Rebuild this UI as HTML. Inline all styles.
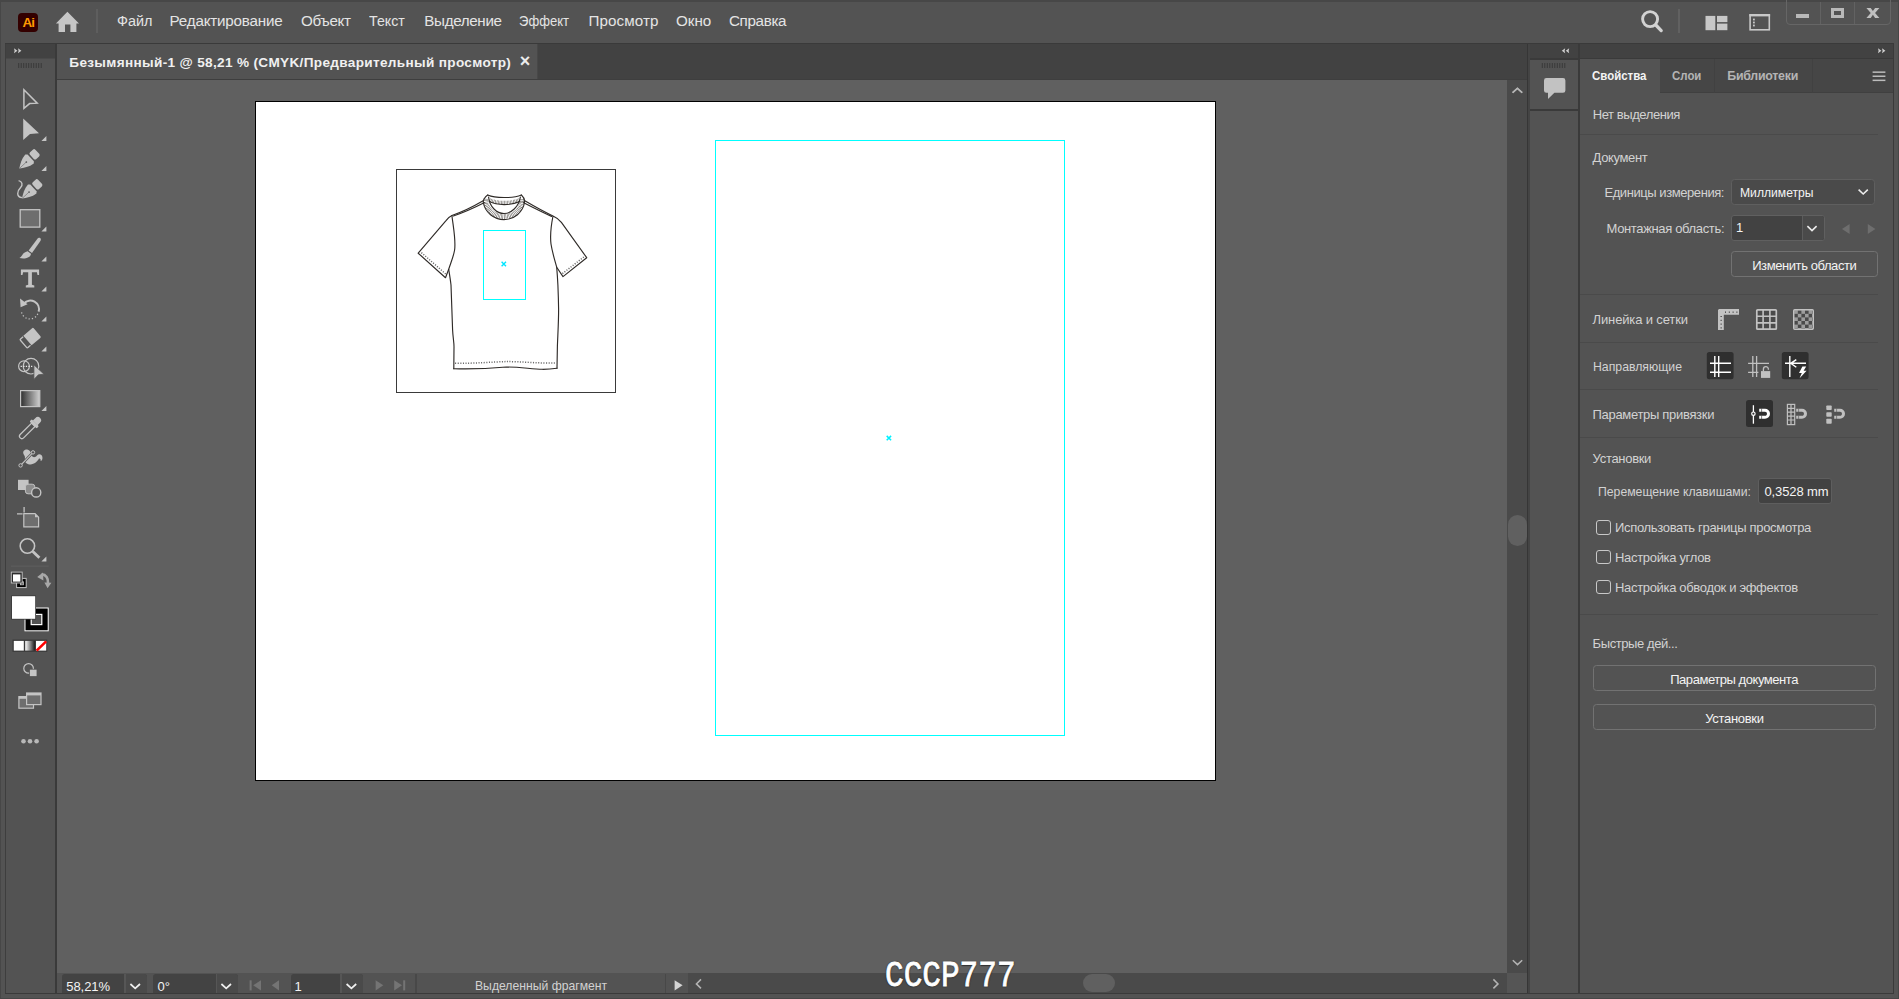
<!DOCTYPE html>
<html lang="ru"><head><meta charset="utf-8"><title>Безымянный-1 @ 58,21 % (CMYK/Предварительный просмотр)</title>
<style>
*{box-sizing:border-box;margin:0;padding:0}
html,body{width:1899px;height:999px;overflow:hidden;background:#535353}
body{position:relative;font-family:"Liberation Sans",sans-serif;color:#dcdcdc;font-size:13px}
.a{position:absolute}
.t{position:absolute;white-space:nowrap;line-height:1}
svg{position:absolute;overflow:visible}
</style></head><body>
<!-- window frame -->
<div class="a" style="left:0;top:0;width:1899px;height:2px;background:#474747"></div>
<div class="a" style="left:0;top:0;width:1px;height:999px;background:#474747"></div>
<div class="a" style="left:1898px;top:0;width:1px;height:999px;background:#474747"></div>
<div class="a" style="left:0;top:998px;width:1899px;height:1px;background:#474747"></div>

<!-- tab bar -->
<div class="a" style="left:5px;top:43px;width:1889px;height:1px;background:#3a3a3a"></div>
<div class="a" style="left:57px;top:44px;width:1470px;height:35px;background:#424242"></div>
<div class="a" style="left:57px;top:44px;width:480px;height:35px;background:#535353"></div>
<div class="a" style="left:537px;top:44px;width:1.4px;height:35px;background:#484848"></div>
<div class="a" style="left:57px;top:79px;width:1470px;height:1px;background:#3e3e3e"></div>

<!-- canvas -->
<div class="a" style="left:57px;top:80px;width:1450px;height:893px;background:#606060"></div>
<!-- artboard -->
<div class="a" style="left:255px;top:101px;width:961px;height:680px;background:#fff;border:1px solid #000"></div>
<div class="a" style="left:396px;top:169px;width:220px;height:224px;border:1.3px solid #3a3a3a"></div>
<div class="a" style="left:715px;top:140px;width:350px;height:596px;border:1px solid #00ffff"></div>
<svg style="left:396px;top:169px" width="220" height="224" viewBox="396 169 220 224">
<g fill="none" stroke="#2f2b28" stroke-width="1.15" stroke-linejoin="round" stroke-linecap="round">
<!-- left shoulder + sleeve -->
<path d="M483.6 200.6 C472 207.4 462 212.2 451.9 215.5 C449.5 216.6 447.6 218.4 446 220.6 L418.2 253.2 L445.5 277.7 L448.7 269.3"/>
<path d="M484.6 202.6 C474 208 464 212.6 453.4 216"/>
<path d="M451.9 215.5 C453.4 228 456 240 454.6 250 C453.2 258 450.2 264 448.7 269.3 C449.8 276 450.6 281 451 285 C451.6 300 452 315 452.6 330 C453 338 454 342 454 346.7 L453.8 368.7"/>
<!-- hem -->
<path d="M453.8 368.7 C470 369.2 490 368.4 506.3 367 C520 367 530 368.8 542.7 369.3 C548 369.3 553 368.8 557 368.2"/>
<path d="M455 363.3 C475 363.5 492 362 506 361.6 C520 361.4 540 363.6 556.2 363" stroke-width="1.5" stroke-dasharray="1.1 1.5" stroke="#6a6a6a" stroke-linecap="butt"/>
<!-- right side -->
<path d="M557 368.2 L557.4 346 C557.8 335 558.7 320 558.6 309 C558.5 300 558.2 292 557.9 285 C557.6 279 557.2 273 556.7 267.2"/>
<path d="M553 216 C551 226 550 236 551 244 C552.4 253 555 261 556.7 267.2 L563 276.6 L586.7 257.7 L561.4 222.4 C559.4 219.6 556.6 217.6 553 216 C545 212.4 536 207.4 524.4 200.6"/>
<path d="M523.4 202.6 C534 208 543 212.6 551.6 216.4"/>
<!-- sleeve hem stitches -->
<path d="M421.4 252.6 L446.4 274.6" stroke-width="1.5" stroke-dasharray="1.1 1.5" stroke="#6a6a6a" stroke-linecap="butt"/>
<path d="M583.8 257 L562.2 273.8" stroke-width="1.5" stroke-dasharray="1.1 1.5" stroke="#6a6a6a" stroke-linecap="butt"/>
<!-- collar ribbing -->
<path d="M485.6 198.8 C485.2 209 494 216.5 504 216.5 C514 216.5 522.6 209 522.4 198.8" stroke="#5a5652" stroke-width="5" stroke-dasharray="0.55 0.95" stroke-linecap="butt"/>
<path d="M489.6 199.8 C497 203.6 511 203.6 519.4 199.8" stroke="#5a5652" stroke-width="3.6" stroke-dasharray="0.55 0.95" stroke-linecap="butt"/>
<!-- collar outlines -->
<path d="M487.7 195 C484.6 197.4 483 200 483.3 202.5 C485 212.4 494 219.6 504 219.6 C514 219.6 523 212.4 524.6 202 C524.8 199.6 523.6 197 521.4 195"/>
<path d="M488.6 197 C489.4 207 497 213.5 504 213.5 C511 213.5 518.8 207 520.4 197"/>
<path d="M487.7 195 C495 198.4 513 198.4 521.4 195"/>
<path d="M489.4 201.6 C497 205.6 511 205.6 519.8 201.6"/>
</g>
<rect x="483.5" y="230.5" width="42" height="69" fill="none" stroke="#00ffff" stroke-width="1"/>
<path d="M501.6 261.8 L506 266.2 M506 261.8 L501.6 266.2" stroke="#00e5ff" stroke-width="1.4"/>
<path d="M886.7 435.9 L891.1 440.3 M891.1 435.9 L886.7 440.3" stroke="#00f0ff" stroke-width="1.5"/>
</svg>


<!-- v scrollbar -->
<div class="a" style="left:1507px;top:80px;width:20px;height:893px;background:#4a4a4a"></div>
<div class="a" style="left:1508px;top:515px;width:19px;height:31.4px;border-radius:9.5px;background:#606060"></div>
<!-- status bar -->
<div class="a" style="left:57px;top:973px;width:1470px;height:20px;background:#535353"></div>
<div class="a" style="left:688px;top:973px;width:819px;height:20px;background:#4a4a4a"></div>
<div class="a" style="left:1083px;top:974px;width:32px;height:18px;border-radius:9px;background:#606060"></div>
<!-- status bar fields -->
<div class="a" style="left:62px;top:974.3px;width:85px;height:19px;background:#434343;border-radius:3px 3px 0 0"></div>
<div class="a" style="left:125.6px;top:974.3px;width:21.4px;height:19px;background:#4a4a4a;border-radius:0 3px 0 0"></div>
<div class="a" style="left:124.2px;top:974.3px;width:1.4px;height:19px;background:#565656"></div>
<div class="a" style="left:153.3px;top:974.3px;width:85px;height:19px;background:#434343;border-radius:3px 3px 0 0"></div>
<div class="a" style="left:216.9px;top:974.3px;width:21.4px;height:19px;background:#4a4a4a;border-radius:0 3px 0 0"></div>
<div class="a" style="left:215.5px;top:974.3px;width:1.4px;height:19px;background:#565656"></div>
<div class="a" style="left:291px;top:974.3px;width:72.4px;height:19px;background:#434343;border-radius:3px 3px 0 0"></div>
<div class="a" style="left:341.6px;top:974.3px;width:21.8px;height:19px;background:#4a4a4a;border-radius:0 3px 0 0"></div>
<div class="a" style="left:340.2px;top:974.3px;width:1.4px;height:19px;background:#565656"></div>
<div class="a" style="left:415.4px;top:974px;width:1.2px;height:19px;background:#484848"></div>
<div class="a" style="left:665px;top:974px;width:1.2px;height:19px;background:#484848"></div>
<svg style="left:57px;top:973px" width="1471" height="20" viewBox="57 973 1471 20">
<g fill="none" stroke="#f0f0f0" stroke-width="1.7"><path d="M130.4 984 L135.2 988.4 L140 984"/><path d="M221.4 984 L226.2 988.4 L231 984"/><path d="M346.6 984 L351.4 988.4 L356.2 984"/></g>
<g fill="#747474"><rect x="249.6" y="980.3" width="2" height="10.1"/><path d="M261 980.3 V990.4 L253.2 985.35 Z"/><path d="M279 980.3 V990.4 L271.7 985.35 Z"/><path d="M375.6 980.3 V990.4 L383.3 985.35 Z"/><path d="M394.2 980.3 V990.4 L402 985.35 Z"/><rect x="403.2" y="980.3" width="2" height="10.1"/></g>
<path d="M674.6 980.3 V990.4 L682.6 985.35 Z" fill="#d4d4d4"/>
<path d="M701 979.4 L696.4 983.9 L701 988.4" fill="none" stroke="#b4b4b4" stroke-width="1.5"/>
<path d="M1493.4 979.4 L1498 983.9 L1493.4 988.4" fill="none" stroke="#b4b4b4" stroke-width="1.5"/>
<path d="M1512.6 92.6 L1517.4 88.2 L1522.2 92.6" fill="none" stroke="#b4b4b4" stroke-width="1.5" transform="translate(0 0)"/>
</svg>
<svg style="left:1507px;top:80px" width="21" height="893" viewBox="1507 80 21 893">
<path d="M1512.6 92.8 L1517.4 88.4 L1522.2 92.8" fill="none" stroke="#b4b4b4" stroke-width="1.5"/>
<path d="M1512.8 960.2 L1517.5 964.6 L1522.2 960.2" fill="none" stroke="#b4b4b4" stroke-width="1.5"/>
</svg>
<div class="a" style="left:1507px;top:973px;width:20px;height:20px;background:#555"></div>

<div class="a" style="left:5px;top:993px;width:1889px;height:1px;background:#3a3a3a"></div>

<!-- left toolbar -->
<div class="a" style="left:5px;top:44px;width:52px;height:949px;background:#535353;border-left:1px solid #3e3e3e;border-right:2px solid #3a3a3a"></div>
<div class="a" style="left:6px;top:44px;width:49px;height:14px;background:#424242"></div>
<div class="a" style="left:6px;top:58px;width:49px;height:1px;background:#4a4a4a"></div>
<!-- toolbar header chevrons and grip -->
<svg style="left:0;top:0" width="57" height="800" viewBox="0 0 57 800">
<g fill="#d0d0d0"><path d="M14 48.2 l3.4 2.5 l-3.4 2.5 l0.6 -2.5 z M18 48.2 l3.4 2.5 l-3.4 2.5 l0.6 -2.5 z"/></g>
<g fill="#3a3a3a"><rect x="18.2" y="63" width="1" height="5"/><rect x="20.7" y="63" width="1" height="5"/><rect x="23.2" y="63" width="1" height="5"/><rect x="25.7" y="63" width="1" height="5"/><rect x="28.2" y="63" width="1" height="5"/><rect x="30.7" y="63" width="1" height="5"/><rect x="33.2" y="63" width="1" height="5"/><rect x="35.7" y="63" width="1" height="5"/><rect x="38.2" y="63" width="1" height="5"/><rect x="40.7" y="63" width="1" height="5"/></g>
<g fill="#c4c4c4" stroke="none">
<!-- selection (outline) -->
<path d="M23.9 89.8 L37.2 103.2 L29.6 103.6 L23.9 108.4 Z" fill="none" stroke="#c4c4c4" stroke-width="1.5" stroke-linejoin="miter"/>
<!-- direct selection -->
<path d="M23.2 118.4 L39 133.3 L30 134 L23.2 140 Z"/>
<!-- flyout triangles -->
<path d="M46.4 136 V141 H41.4 Z M46.4 166 V171 H41.4 Z M46.4 226.4 V231.4 H41.4 Z M46.4 256.4 V261.4 H41.4 Z M46.4 286.4 V291.4 H41.4 Z M46.4 316.4 V321.4 H41.4 Z M46.4 346.4 V351.4 H41.4 Z M46.4 406 V411 H41.4 Z M46.4 556.4 V561.4 H41.4 Z"/>
<!-- pen -->
<g transform="translate(19.3 168.6) rotate(-43)"><path d="M0 0 C3.4 -2.6 8.6 -5.8 14 -6.2 L15.6 -4.6 V4.6 L14 6.2 C8.6 5.8 3.4 2.6 0 0 Z"/><rect x="17.2" y="-4.6" width="7.4" height="9.2" rx="1.8"/><path d="M1 0 H9" stroke="#777" stroke-width="0.7"/><circle cx="9.6" cy="0" r="0.9" fill="#666"/></g>
<!-- curvature pen -->
<g transform="translate(22 198.6) rotate(-43)"><path d="M0 0 C3.4 -2.6 8.6 -5.8 14 -6.2 L15.6 -4.6 V4.6 L14 6.2 C8.6 5.8 3.4 2.6 0 0 Z"/><rect x="17.2" y="-4.6" width="7.4" height="9.2" rx="1.8"/><path d="M1 0 H9" stroke="#777" stroke-width="0.7"/><circle cx="9.6" cy="0" r="0.9" fill="#666"/></g>
<path d="M22 197.6 C16 197 17 191 20.6 187.4 C23 185 22.4 181.4 18.6 180.6" fill="none" stroke="#c4c4c4" stroke-width="1.4"/>
<!-- rectangle -->
<rect x="20.2" y="209.7" width="19.6" height="17.4" fill="#6e6e6e" stroke="#c4c4c4" stroke-width="1.3"/>
<!-- brush -->
<path d="M39.6 237.8 C41 238.4 41.2 239.6 40.4 241 L32 253 L28.6 250.6 L37.6 238.6 C38.2 237.8 38.8 237.5 39.6 237.8 Z"/>
<path d="M27.6 251.2 L31 253.8 C30.6 257.6 25 259.4 19.4 258 C22.4 256.6 22 252.6 27.6 251.2 Z"/>
<!-- type T -->
<path d="M20.9 269.6 H39.1 V275 H37.5 L36.9 272.3 H31.9 V284.8 L34.3 285.4 V287.4 H25.8 V285.4 L28.2 284.8 V272.3 H23.1 L22.5 275 H20.9 Z"/>
<!-- rotate -->
<path d="M24 303.4 A8.6 8.6 0 0 1 38.6 311.6" fill="none" stroke="#c4c4c4" stroke-width="2"/>
<path d="M20 298.6 L27.6 304.2 L20.6 307.2 Z"/>
<path d="M37.8 313.8 A8.6 8.6 0 0 1 21.4 311.4" fill="none" stroke="#c4c4c4" stroke-width="1.3" stroke-dasharray="1.2 2.1"/>
<!-- eraser -->
<g transform="translate(30.05 338.3) rotate(49.6)"><path d="M-5.2 -9.25 H5.2 Q6.35 -9.25 6.35 -8.1 V3.4 H-6.35 V-8.1 Q-6.35 -9.25 -5.2 -9.25 Z"/><path d="M-5.7 4.2 V7.6 Q-5.7 8.6 -4.7 8.6 H4.7 Q5.7 8.6 5.7 7.6 V4.2" fill="none" stroke="#c4c4c4" stroke-width="1.3"/></g>
<!-- shape builder -->
<circle cx="24" cy="366.2" r="5.4" fill="none" stroke="#c4c4c4" stroke-width="1.2"/>
<circle cx="31" cy="366.2" r="7.8" fill="none" stroke="#c4c4c4" stroke-width="1.2"/>
<path d="M20.6 366.4 H33.4" stroke="#e6e6e6" stroke-width="1.1" stroke-dasharray="1.3 1.3" fill="none"/>
<path d="M33.9 364.8 L44 374.2 L38.4 374.8 L33.9 379.4 Z" stroke="#535353" stroke-width="0.8"/>
<!-- eyedropper -->
<g transform="translate(20.2 437.9) rotate(-45)"><path d="M2.4 -2.4 H18.6 V2.4 H2.4 Q0 2.4 0 0 Q0 -2.4 2.4 -2.4 Z" fill="none" stroke="#c4c4c4" stroke-width="1.3"/><rect x="18.2" y="-5" width="3.2" height="10" rx="1"/><path d="M21.2 -3.3 H24.6 Q28.2 -3.3 28.2 0 Q28.2 3.3 24.6 3.3 H21.2 Z"/></g>
<!-- puppet / symbol -->
<path d="M24 455 C22 452 24 449.4 27.2 449.6 C30 450 31 452.6 31.6 455 C32.6 458 35.4 457.6 37 455.6 C38.6 453.6 41.8 454 42.4 457 C42.8 459.4 41.6 461 40.6 461 C41 459.4 40.2 458.2 39 458.6 C37.6 461.6 34 464.8 29.6 464.4 C26 464 24.6 461.6 24.8 459.4 C25 457.6 25.2 456.6 24 455 Z"/>
<path d="M20.8 465.2 L32.8 452.6" stroke="#535353" stroke-width="2.6" fill="none"/>
<path d="M20.8 465.2 L32.8 452.6" stroke="#c4c4c4" stroke-width="1.1" fill="none"/>
<circle cx="20.6" cy="465.4" r="1.7" fill="#535353" stroke="#c4c4c4" stroke-width="1"/>
<circle cx="33" cy="452.4" r="1.7" fill="#535353" stroke="#c4c4c4" stroke-width="1"/>
<!-- blend -->
<rect x="18" y="479.8" width="10.6" height="10.2"/>
<rect x="25.4" y="484.2" width="9.4" height="9.6" rx="2.6" fill="#8c8c8c" stroke="#c4c4c4" stroke-width="1"/>
<circle cx="36.2" cy="492.4" r="4.6" fill="#535353" stroke="#c4c4c4" stroke-width="1.4"/>
<!-- artboard tool -->
<path d="M23.8 513.6 H35 L38.6 517.2 V526.8 H23.8 Z" fill="#6e6e6e" stroke="#c4c4c4" stroke-width="1.2"/>
<path d="M35 513.6 V517.2 H38.6 Z"/>
<path d="M17 513.9 H22.6 M24.1 507 V512.6" stroke="#c4c4c4" stroke-width="1.3" fill="none"/>
<!-- zoom -->
<circle cx="27.4" cy="546" r="7.2" fill="none" stroke="#c4c4c4" stroke-width="1.6"/>
<path d="M32.8 551.4 L39.4 557.8" stroke="#c4c4c4" stroke-width="2.8" fill="none"/>
<!-- separator -->
<rect x="11" y="565.6" width="37.6" height="1" fill="#5f5f5f"/>
<!-- default fill/stroke -->
<rect x="16.6" y="578.4" width="9.6" height="9.2" fill="#000" stroke="#c4c4c4" stroke-width="1"/>
<rect x="20.4" y="581.8" width="3" height="3" fill="#535353" stroke="#c4c4c4" stroke-width="0.8"/>
<rect x="11.3" y="572.1" width="10.9" height="10.9" fill="#2c2c2c" stroke="#c4c4c4" stroke-width="0.9"/>
<rect x="13" y="574.4" width="7.4" height="7.2" fill="#fff"/>
<!-- swap arrow -->
<path d="M41.6 574.4 C46 574.6 48.4 578 48 583.2" fill="none" stroke="#a8a8a8" stroke-width="2.6"/>
<path d="M37.2 577 L43 572.6 L43.4 580.6 Z M44.4 582.4 L51.4 582.8 L47.6 588.2 Z" fill="#a8a8a8"/>
<!-- fill / stroke -->
<rect x="24.5" y="607.5" width="24.2" height="23.8" fill="#fff"/>
<rect x="25.5" y="608.5" width="22.2" height="21.8" fill="#000"/>
<rect x="30.6" y="613.8" width="11.8" height="11.4" fill="#fff"/>
<rect x="31.8" y="615" width="9.4" height="9" fill="#535353"/>
<rect x="11.2" y="595.4" width="24.8" height="24.2" fill="#3a3a3a"/>
<rect x="12" y="596.2" width="23.2" height="22.6" fill="#fff"/>
<!-- color / gradient / none -->
<rect x="12.5" y="639.6" width="34.8" height="12.2" fill="#3a3a3a"/>
<rect x="13.8" y="640.9" width="10" height="9.7" fill="#fff"/>
<rect x="25.2" y="640.9" width="9.6" height="9.7" fill="url(#gr1)"/>
<rect x="36" y="640.9" width="10.2" height="9.7" fill="#fff"/>
<path d="M36.6 650.6 L46.2 641.4" stroke="#f00" stroke-width="2.6" fill="none"/>
<!-- draw mode -->
<circle cx="28.6" cy="668.4" r="4.8" fill="none" stroke="#c4c4c4" stroke-width="1.2"/>
<rect x="29.4" y="669.2" width="7.6" height="7.4" stroke="#535353" stroke-width="0.8"/>
<!-- screen mode -->
<rect x="18.9" y="696.6" width="14.6" height="11.6" fill="#6e6e6e" stroke="#c4c4c4" stroke-width="1.2"/>
<rect x="18.9" y="696.6" width="14.6" height="2.2"/>
<rect x="26.6" y="693" width="14.4" height="11.6" fill="#6e6e6e" stroke="#c4c4c4" stroke-width="1.2"/>
<rect x="26.6" y="693" width="14.4" height="2.4"/>
<!-- dots -->
<circle cx="23.5" cy="741.3" r="2.3" fill="#b8b8b8"/><circle cx="30" cy="741.3" r="2.3" fill="#b8b8b8"/><circle cx="36.6" cy="741.3" r="2.3" fill="#b8b8b8"/>
</g>
<defs><linearGradient id="gr1" x1="0" x2="1" y1="0" y2="0"><stop offset="0" stop-color="#fff"/><stop offset="1" stop-color="#1e1e1e"/></linearGradient>
<linearGradient id="gr2" x1="0" x2="1" y1="0" y2="0"><stop offset="0" stop-color="#2e2e2e"/><stop offset="1" stop-color="#d0d0d0"/></linearGradient></defs>
<!-- gradient tool -->
<rect x="20.6" y="390.6" width="19.2" height="16" fill="url(#gr2)" stroke="#c4c4c4" stroke-width="1.2"/>
</svg>


<!-- right dock -->
<div class="a" style="left:1527px;top:44px;width:1px;height:949px;background:#363636"></div>
<div class="a" style="left:1528px;top:44px;width:2px;height:949px;background:#444"></div>
<div class="a" style="left:1530px;top:44px;width:48px;height:949px;background:#535353"></div>
<div class="a" style="left:1530px;top:44px;width:48px;height:14px;background:#424242"></div>
<div class="a" style="left:1530px;top:58px;width:48px;height:2px;background:#3a3a3a"></div>
<div class="a" style="left:1530px;top:109px;width:48px;height:2px;background:#3a3a3a"></div>
<div class="a" style="left:1578px;top:44px;width:2px;height:949px;background:#3a3a3a"></div>
<!-- properties panel -->
<div class="a" style="left:1580px;top:44px;width:314px;height:949px;background:#535353"></div>
<div class="a" style="left:1580px;top:44px;width:314px;height:14px;background:#424242"></div>
<div class="a" style="left:1580px;top:58px;width:314px;height:1px;background:#3a3a3a"></div>
<div class="a" style="left:1580px;top:59px;width:314px;height:34px;background:#464646;border-bottom:1px solid #404040"></div>
<div class="a" style="left:1580px;top:59px;width:80px;height:34px;background:#535353"></div>
<div class="a" style="left:1714px;top:59px;width:1px;height:34px;background:#414141"></div>
<div class="a" style="left:1812px;top:59px;width:1px;height:34px;background:#414141"></div>
<div class="a" style="left:1893px;top:44px;width:1px;height:949px;background:#3a3a3a"></div>
<!-- dock header icons -->
<svg style="left:1528px;top:44px" width="371" height="70" viewBox="1528 44 371 70">
<g fill="#d0d0d0"><path d="M1565.2 48.2 l-0.6 2.5 l0.6 2.5 l-3.4 -2.5 z M1569.2 48.2 l-0.6 2.5 l0.6 2.5 l-3.4 -2.5 z"/><path d="M1878 48.2 l3.4 2.5 l-3.4 2.5 l0.6 -2.5 z M1882 48.2 l3.4 2.5 l-3.4 2.5 l0.6 -2.5 z"/></g>
<g fill="#3a3a3a"><rect x="1541.8" y="63" width="1" height="5"/><rect x="1544.3" y="63" width="1" height="5"/><rect x="1546.8" y="63" width="1" height="5"/><rect x="1549.3" y="63" width="1" height="5"/><rect x="1551.8" y="63" width="1" height="5"/><rect x="1554.3" y="63" width="1" height="5"/><rect x="1556.8" y="63" width="1" height="5"/><rect x="1559.3" y="63" width="1" height="5"/><rect x="1561.8" y="63" width="1" height="5"/><rect x="1564.3" y="63" width="1" height="5"/></g>
<path d="M1546.4 78 H1563 Q1565.4 78 1565.4 80.4 V90.4 Q1565.4 92.8 1563 92.8 H1554.4 L1548 99 V92.8 H1546.4 Q1544 92.8 1544 90.4 V80.4 Q1544 78 1546.4 78 Z" fill="#c2c2c2"/>
<g fill="#bcbcbc"><rect x="1872.6" y="71.4" width="12.8" height="1.5"/><rect x="1872.6" y="75.5" width="12.8" height="1.5"/><rect x="1872.6" y="79.6" width="12.8" height="1.5"/></g>
</svg>
<!-- separators -->
<div class="a" style="left:1580px;top:134px;width:298px;height:1px;background:#4a4a4a"></div>
<div class="a" style="left:1580px;top:294px;width:298px;height:1px;background:#4a4a4a"></div>
<div class="a" style="left:1580px;top:342px;width:298px;height:1px;background:#4a4a4a"></div>
<div class="a" style="left:1580px;top:389px;width:298px;height:1px;background:#4a4a4a"></div>
<div class="a" style="left:1580px;top:437px;width:298px;height:1px;background:#4a4a4a"></div>
<div class="a" style="left:1580px;top:614px;width:298px;height:1px;background:#4a4a4a"></div>
<!-- units dropdown -->
<div class="a" style="left:1731px;top:178.5px;width:144px;height:26px;background:#4a4a4a;border:1.2px solid #5f5f5f;border-radius:3.5px"></div>
<svg style="left:1856px;top:187px" width="14" height="10" viewBox="1856 187 14 10"><path d="M1858.6 189.6 L1863.2 194 L1867.8 189.6" fill="none" stroke="#ececec" stroke-width="1.6"/></svg>
<!-- artboard combo -->
<div class="a" style="left:1731px;top:215px;width:93.5px;height:26px;background:#424242;border:1px solid #606060;border-radius:3px"></div>
<div class="a" style="left:1801.6px;top:216px;width:22px;height:24px;background:#4a4a4a;border-left:1px solid #5c5c5c;border-radius:0 2px 2px 0"></div>
<svg style="left:1804px;top:223px" width="16" height="10" viewBox="1804 223 16 10"><path d="M1807.4 226.2 L1812 230.6 L1816.6 226.2" fill="none" stroke="#ececec" stroke-width="1.6"/></svg>
<svg style="left:1840px;top:222px" width="38" height="14" viewBox="1840 222 38 14"><path d="M1849.6 224 V234 L1842 229 Z M1867.8 224 V234 L1875.4 229 Z" fill="#6e6e6e"/></svg>
<!-- buttons -->
<div class="a" style="left:1731px;top:251px;width:146.5px;height:26px;border:1.2px solid #727272;border-radius:3.5px"></div>
<div class="a" style="left:1592.5px;top:665.3px;width:283.7px;height:26px;border:1.2px solid #727272;border-radius:3.5px"></div>
<div class="a" style="left:1592.5px;top:704px;width:283.7px;height:26px;border:1.2px solid #727272;border-radius:3.5px"></div>
<!-- key increment input -->
<div class="a" style="left:1758px;top:478.2px;width:74.2px;height:25.4px;background:#424242;border:1px solid #5e5e5e;border-radius:3px"></div>
<!-- checkboxes -->
<div class="a" style="left:1596px;top:520px;width:15px;height:14.6px;border:1.3px solid #c8c8c8;border-radius:3px"></div>
<div class="a" style="left:1596px;top:549.9px;width:15px;height:14.6px;border:1.3px solid #c8c8c8;border-radius:3px"></div>
<div class="a" style="left:1596px;top:579.5px;width:15px;height:14.6px;border:1.3px solid #c8c8c8;border-radius:3px"></div>
<svg style="left:1700px;top:300px" width="160" height="135" viewBox="1700 300 160 135">
<defs>
<pattern id="chk" x="1794.2" y="310.2" width="7.2" height="7.2" patternUnits="userSpaceOnUse"><rect width="7.2" height="7.2" fill="#9c9c9c"/><rect x="3.6" width="3.6" height="3.6" fill="#4a4a4a"/><rect y="3.6" width="3.6" height="3.6" fill="#4a4a4a"/></pattern>
</defs>
<!-- ruler -->
<path d="M1719 309 H1739 V314.8 H1723.8 V330 H1718 V310 Z" fill="#c2c2c2"/>
<g fill="#555"><rect x="1725" y="311.4" width="1" height="1.6"/><rect x="1728.8" y="311.4" width="1" height="1.6"/><rect x="1732.6" y="311.4" width="1" height="1.6"/><rect x="1736.4" y="311.4" width="1" height="1.6"/><rect x="1720.4" y="316" width="1.6" height="1"/><rect x="1720.4" y="319.8" width="1.6" height="1"/><rect x="1720.4" y="323.6" width="1.6" height="1"/><rect x="1720.4" y="327.4" width="1.6" height="1"/></g>
<!-- grid -->
<rect x="1756.8" y="309.8" width="19.5" height="19.4" fill="#4a4a4a" stroke="#c2c2c2" stroke-width="1.7" rx="0.8"/>
<path d="M1763.1 309 V330 M1769.9 309 V330 M1756 316.2 H1777 M1756 322.9 H1777" stroke="#c2c2c2" stroke-width="1.6" fill="none"/>
<!-- transparency grid -->
<rect x="1793.7" y="309.7" width="19.6" height="19.6" fill="url(#chk)" stroke="#c2c2c2" stroke-width="1.4" rx="1"/>
<!-- guides show -->
<rect x="1706.8" y="352" width="26.8" height="27.2" rx="2.5" fill="#2f2f2f"/>
<path d="M1714.8 356 V377 M1718.7 356 V377 M1710 363.3 H1731 M1710 372.3 H1731" stroke="#fff" stroke-width="1.4" fill="none"/>
<!-- guides lock -->
<path d="M1752.8 356 V377 M1756.6 356 V377 M1748.1 363.3 H1769 M1748.1 372.3 H1758.4" stroke="#c0c0c0" stroke-width="1.3" fill="none"/>
<rect x="1761" y="371.1" width="9.2" height="6.8" fill="#c0c0c0"/>
<path d="M1763.4 371.4 V369.2 A2.5 2.6 0 0 1 1768.4 369.2 V369.8" stroke="#c0c0c0" stroke-width="1.3" fill="none"/>
<!-- smart guides -->
<rect x="1781.8" y="352" width="26.8" height="27.2" rx="2.5" fill="#2f2f2f"/>
<path d="M1789.8 356 V377 M1785 363.3 H1806 M1796.3 359.6 L1790.8 363.3 L1796.3 367.2" stroke="#fff" stroke-width="1.4" fill="none"/>
<path d="M1802.4 366.4 H1806.2 L1803.6 370.8 H1806.6 L1799.6 378.2 L1801.8 372.9 H1799 Z" fill="#fff"/>
<!-- snap 1 -->
<rect x="1746" y="400" width="27" height="27" rx="2.5" fill="#2f2f2f"/>
<path d="M1753.4 405.2 V423.7" stroke="#fff" stroke-width="1.3"/>
<circle cx="1753.4" cy="413.7" r="1.7" fill="#2f2f2f" stroke="#fff" stroke-width="1.2"/>
<path d="M1759.2 410.3 H1765 A3.5 3.5 0 0 1 1765 417.3 H1759.2" stroke="#fff" stroke-width="3" fill="none"/>
<path d="M1761.6 408.6 V412 M1761.6 415.6 V419" stroke="#2f2f2f" stroke-width="0.6"/>
<!-- snap 2 -->
<rect x="1787.4" y="404.4" width="7.3" height="20.2" fill="none" stroke="#c0c0c0" stroke-width="1.2"/>
<path d="M1791 404 V425 M1787 408.3 H1795 M1787 412.2 H1795 M1787 416.1 H1795 M1787 420 H1795" stroke="#c0c0c0" stroke-width="1.2" fill="none"/>
<path d="M1796.2 410.3 H1802 A3.5 3.5 0 0 1 1802 417.3 H1796.2" stroke="#c0c0c0" stroke-width="3" fill="none"/>
<path d="M1798.6 408.6 V412 M1798.6 415.6 V419" stroke="#535353" stroke-width="0.6"/>
<!-- snap 3 -->
<g fill="#c0c0c0"><rect x="1826.3" y="405.5" width="5.4" height="4.6" rx="0.8"/><rect x="1826.3" y="412.2" width="5.4" height="4.6" rx="0.8"/><rect x="1826.3" y="418.8" width="5.4" height="4.9" rx="0.8"/></g>
<path d="M1834.2 410.3 H1840 A3.5 3.5 0 0 1 1840 417.3 H1834.2" stroke="#c0c0c0" stroke-width="3" fill="none"/>
<path d="M1836.6 408.6 V412 M1836.6 415.6 V419" stroke="#535353" stroke-width="0.6"/>
</svg>



<!-- top bar -->
<div class="a" style="left:18px;top:13px;width:20px;height:19px;border-radius:4px;background:#300"></div>
<span class="t" style="left:22.4px;top:16.3px;font-size:13.4px;font-weight:700;color:#ff9a00;letter-spacing:-0.9px">Ai</span>
<svg style="left:55px;top:11px" width="26" height="22" viewBox="55 11 26 22"><path d="M67.4 11.8 L79 23.6 H76.4 V32 H70.4 V24.6 H65 V32 H58.6 V23.6 H55.9 Z" fill="#c6c6c6"/></svg>
<div class="a" style="left:95.5px;top:9px;width:2px;height:24px;background:#5e5e5e"></div>
<svg style="left:1638px;top:6px" width="30" height="30" viewBox="1638 6 30 30"><circle cx="1650.1" cy="19.1" r="7.5" fill="none" stroke="#d2d2d2" stroke-width="2.9"/><path d="M1655.8 25 L1661.2 30.6" stroke="#d2d2d2" stroke-width="3.3" stroke-linecap="round"/></svg>
<div class="a" style="left:1678.3px;top:9px;width:1.5px;height:24px;background:#616161"></div>
<svg style="left:1704px;top:14px" width="26" height="18" viewBox="1704 14 26 18"><g fill="#c8c8c8"><rect x="1705.5" y="15.9" width="9.8" height="14.3"/><rect x="1717" y="15.9" width="10.4" height="6.2"/><rect x="1717" y="23.6" width="10.4" height="6.6"/></g></svg>
<svg style="left:1748px;top:12px" width="24" height="20" viewBox="1748 12 24 20"><rect x="1750.1" y="15" width="19.2" height="14.8" fill="none" stroke="#c8c8c8" stroke-width="1.6"/><rect x="1749.3" y="14" width="20.8" height="2.4" fill="#c8c8c8"/><g fill="#c8c8c8"><rect x="1753" y="18.6" width="1.8" height="1.8"/><rect x="1753" y="21.6" width="1.8" height="1.8"/><rect x="1753" y="24.6" width="1.8" height="1.8"/></g></svg>
<div class="a" style="left:1785.5px;top:-4px;width:105px;height:28.6px;border:1px solid #666;border-radius:0 0 4px 4px"></div>
<div class="a" style="left:1820.3px;top:2px;width:1px;height:22px;background:#626262"></div>
<div class="a" style="left:1854.4px;top:2px;width:1px;height:22px;background:#626262"></div>
<div class="a" style="left:1796px;top:14px;width:13.3px;height:4px;background:#b8b8b8"></div>
<div class="a" style="left:1831px;top:8px;width:13.2px;height:10px;border:3px solid #b8b8b8"></div>
<svg style="left:1864px;top:6px" width="18" height="14" viewBox="1864 6 18 14"><path d="M1866.4 8 h4.3 l2.2 3.1 l2.2 -3.1 h4.3 l-4.35 4.95 l4.35 4.95 h-4.3 l-2.2 -3.1 l-2.2 3.1 h-4.3 l4.35 -4.95 z" fill="#c0c0c0"/></svg>
<span class="t" style="left:519.8px;top:52.1px;font-size:18px;font-weight:700;color:#ececec">×</span>

<span class="t" id="t0" style="left:117.3px;top:12.8px;font-size:15.2px;font-weight:400;color:#e4e4e4;letter-spacing:0.000px;transform-origin:0 0;transform:scaleX(0.9479)">Файл</span>
<span class="t" id="t1" style="left:169.5px;top:12.8px;font-size:15.2px;font-weight:400;color:#e4e4e4;letter-spacing:-0.185px">Редактирование</span>
<span class="t" id="t2" style="left:301.0px;top:12.8px;font-size:15.2px;font-weight:400;color:#e4e4e4;letter-spacing:-0.344px">Объект</span>
<span class="t" id="t3" style="left:369.0px;top:12.8px;font-size:15.2px;font-weight:400;color:#e4e4e4;letter-spacing:0.000px;transform-origin:0 0;transform:scaleX(0.9359)">Текст</span>
<span class="t" id="t4" style="left:424.3px;top:12.8px;font-size:15.2px;font-weight:400;color:#e4e4e4;letter-spacing:-0.348px">Выделение</span>
<span class="t" id="t5" style="left:519.0px;top:12.8px;font-size:15.2px;font-weight:400;color:#e4e4e4;letter-spacing:0.000px;transform-origin:0 0;transform:scaleX(0.8602)">Эффект</span>
<span class="t" id="t6" style="left:588.5px;top:12.8px;font-size:15.2px;font-weight:400;color:#e4e4e4;letter-spacing:0.089px">Просмотр</span>
<span class="t" id="t7" style="left:676.0px;top:12.8px;font-size:15.2px;font-weight:400;color:#e4e4e4;letter-spacing:0.001px">Окно</span>
<span class="t" id="t8" style="left:729.0px;top:12.8px;font-size:15.2px;font-weight:400;color:#e4e4e4;letter-spacing:-0.349px">Справка</span>
<span class="t" id="t9" style="left:69.3px;top:55.5px;font-size:13.6px;font-weight:700;color:#f0f0f0;letter-spacing:0.326px">Безымянный-1 @ 58,21 % (CMYK/Предварительный просмотр)</span>
<span class="t" id="t10" style="left:1591.9px;top:69.5px;font-size:12.4px;font-weight:700;color:#f4f4f4;letter-spacing:0.000px;transform-origin:0 0;transform:scaleX(0.9252)">Свойства</span>
<span class="t" id="t11" style="left:1672.0px;top:69.5px;font-size:12.4px;font-weight:700;color:#b4b4b4;letter-spacing:0.000px;transform-origin:0 0;transform:scaleX(0.9233)">Слои</span>
<span class="t" id="t12" style="left:1727.3px;top:69.5px;font-size:12.4px;font-weight:700;color:#b4b4b4;letter-spacing:-0.267px">Библиотеки</span>
<span class="t" id="t13" style="left:1592.8px;top:107.8px;font-size:13px;font-weight:400;color:#d2d2d2;letter-spacing:-0.432px">Нет выделения</span>
<span class="t" id="t14" style="left:1592.6px;top:150.8px;font-size:13px;font-weight:400;color:#d2d2d2;letter-spacing:-0.367px">Документ</span>
<span class="t" id="t15" style="left:1604.4px;top:186.0px;font-size:13px;font-weight:400;color:#d2d2d2;letter-spacing:-0.424px">Единицы измерения:</span>
<span class="t" id="t16" style="left:1740.0px;top:186.0px;font-size:13px;font-weight:400;color:#f4f4f4;letter-spacing:0.000px;transform-origin:0 0;transform:scaleX(0.9328)">Миллиметры</span>
<span class="t" id="t17" style="left:1606.5px;top:221.7px;font-size:13px;font-weight:400;color:#d2d2d2;letter-spacing:-0.349px">Монтажная область:</span>
<span class="t" id="t18" style="left:1736.0px;top:221.2px;font-size:13px;font-weight:400;color:#f4f4f4;letter-spacing:0.000px">1</span>
<span class="t" id="t19" style="left:1752.2px;top:258.8px;font-size:13px;font-weight:400;color:#f4f4f4;letter-spacing:-0.418px">Изменить области</span>
<span class="t" id="t20" style="left:1592.6px;top:313.1px;font-size:13px;font-weight:400;color:#d2d2d2;letter-spacing:-0.140px">Линейка и сетки</span>
<span class="t" id="t21" style="left:1592.6px;top:360.1px;font-size:13px;font-weight:400;color:#d2d2d2;letter-spacing:0.000px;transform-origin:0 0;transform:scaleX(0.9438)">Направляющие</span>
<span class="t" id="t22" style="left:1592.6px;top:408.0px;font-size:13px;font-weight:400;color:#d2d2d2;letter-spacing:-0.315px">Параметры привязки</span>
<span class="t" id="t23" style="left:1592.6px;top:451.7px;font-size:13px;font-weight:400;color:#d2d2d2;letter-spacing:-0.300px">Установки</span>
<span class="t" id="t24" style="left:1598.1px;top:484.8px;font-size:13px;font-weight:400;color:#d2d2d2;letter-spacing:0.000px;transform-origin:0 0;transform:scaleX(0.9406)">Перемещение клавишами:</span>
<span class="t" id="t25" style="left:1764.4px;top:484.5px;font-size:13px;font-weight:400;color:#f4f4f4;letter-spacing:-0.106px">0,3528 mm</span>
<span class="t" id="t26" style="left:1615.0px;top:521.0px;font-size:13px;font-weight:400;color:#d2d2d2;letter-spacing:-0.322px">Использовать границы просмотра</span>
<span class="t" id="t27" style="left:1615.0px;top:550.8px;font-size:13px;font-weight:400;color:#d2d2d2;letter-spacing:-0.317px">Настройка углов</span>
<span class="t" id="t28" style="left:1615.0px;top:580.6px;font-size:13px;font-weight:400;color:#d2d2d2;letter-spacing:-0.327px">Настройка обводок и эффектов</span>
<span class="t" id="t29" style="left:1592.6px;top:637.0px;font-size:13px;font-weight:400;color:#d2d2d2;letter-spacing:-0.421px">Быстрые дей...</span>
<span class="t" id="t30" style="left:1670.2px;top:673.0px;font-size:13px;font-weight:400;color:#f4f4f4;letter-spacing:-0.450px">Параметры документа</span>
<span class="t" id="t31" style="left:1705.2px;top:711.7px;font-size:13px;font-weight:400;color:#f4f4f4;letter-spacing:-0.300px">Установки</span>
<span class="t" id="t32" style="left:66.3px;top:979.8px;font-size:13px;font-weight:400;color:#f4f4f4;letter-spacing:-0.079px">58,21%</span>
<span class="t" id="t33" style="left:157.5px;top:979.8px;font-size:13px;font-weight:400;color:#f4f4f4;letter-spacing:0.062px">0°</span>
<span class="t" id="t34" style="left:294.5px;top:979.8px;font-size:13px;font-weight:400;color:#f4f4f4;letter-spacing:0.000px">1</span>
<span class="t" id="t35" style="left:474.9px;top:978.9px;font-size:13px;font-weight:400;color:#d2d2d2;letter-spacing:0.000px;transform-origin:0 0;transform:scaleX(0.9369)">Выделенный фрагмент</span>
<span class="t" id="wm" style="left:884.6px;top:958px;font-family:'Liberation Mono','DejaVu Sans Mono',monospace;font-weight:400;font-size:37px;color:#fff;-webkit-text-stroke:0.8px #fff;transform-origin:0 0;transform:scaleX(0.84);text-shadow:0 0 1.5px #222,0 0 1.5px #222,0 1px 1px #333">CCCP777</span>

</body></html>
